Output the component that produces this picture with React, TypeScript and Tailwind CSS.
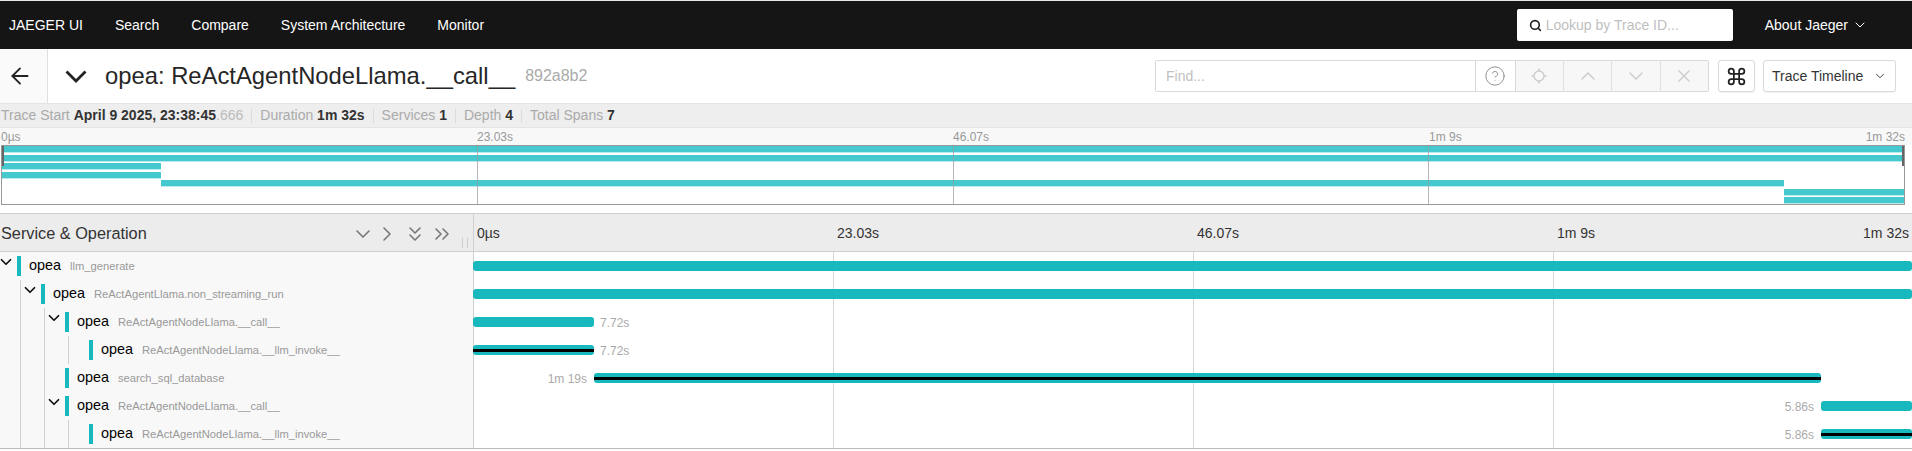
import React from "react";
import {
  ArrowLeft,
  ChevronDown,
  ChevronRight,
  ChevronUp,
  ChevronsDown,
  ChevronsRight,
  CircleHelp,
  Command,
  Search,
  X,
} from "lucide-react";

type Span = {
  depth: number;
  op: string;
  parent: boolean;
  start: number;
  end: number;
  stripe?: boolean;
  label?: string;
  labelLeft?: boolean;
};

const TIMELINE_WIDTH = 1439;

const spans: Span[] = [
  { depth: 0, op: "llm_generate", parent: true, start: 0, end: 1439 },
  { depth: 1, op: "ReActAgentLlama.non_streaming_run", parent: true, start: 0, end: 1439 },
  { depth: 2, op: "ReActAgentNodeLlama.__call__", parent: true, start: 0, end: 121, label: "7.72s" },
  { depth: 3, op: "ReActAgentNodeLlama.__llm_invoke__", parent: false, start: 0, end: 121, stripe: true, label: "7.72s" },
  { depth: 2, op: "search_sql_database", parent: false, start: 121, end: 1348, stripe: true, label: "1m 19s", labelLeft: true },
  { depth: 2, op: "ReActAgentNodeLlama.__call__", parent: true, start: 1348, end: 1439, label: "5.86s", labelLeft: true },
  { depth: 3, op: "ReActAgentNodeLlama.__llm_invoke__", parent: false, start: 1348, end: 1439, stripe: true, label: "5.86s", labelLeft: true },
];

// start / end of each bar in the overview, in px of the canvas
const miniBars = [
  [0, 1902],
  [0, 1902],
  [0, 159],
  [0, 159],
  [159, 1782],
  [1782, 1902],
  [1782, 1902],
];

function TopNav() {
  return (
    <header className="flex h-[49px] items-center border-t border-[#e8e8e8] bg-[#151515] text-[14px] text-white">
      <span className="ml-[9px] mr-[32px]">JAEGER UI</span>
      <nav className="flex gap-[32px]">
        <a>Search</a>
        <a>Compare</a>
        <a>System Architecture</a>
        <a>Monitor</a>
      </nav>
      <div className="ml-auto flex h-[32px] w-[216px] items-center rounded-[2px] bg-white pl-[12px]">
        <Search size={13} strokeWidth={3} className="mr-[4px] text-[#222]" />
        <span className="text-[#bfbfbf]">Lookup by Trace ID...</span>
      </div>
      <div className="ml-[32px] mr-[44px] flex items-center gap-[4px]">
        About Jaeger
        <ChevronDown size={16} strokeWidth={1.5} />
      </div>
    </header>
  );
}

function TitleBar() {
  const navBtn = "flex h-full flex-1 items-center justify-center border-l border-[#e0e0e0] text-[#cccccc]";
  return (
    <div className="flex h-[54px] items-center bg-white">
      <div className="flex h-full w-[48px] items-center justify-center border-r border-[#e0e0e0] bg-[#fafafa] pr-[8px]">
        <ArrowLeft size={26} strokeWidth={1.7} className="text-[#222]" />
      </div>
      <svg width="22" height="13" viewBox="0 0 22 13" fill="none" stroke="#222" strokeWidth="2.8" className="ml-[17px]">
        <path d="M1.5 1.5L11 11L20.5 1.5" />
      </svg>
      <h1 className="ml-[18px] text-[23.8px] leading-none text-[#262626]">opea: ReActAgentNodeLlama.__call__</h1>
      <span className="ml-[10px] text-[16px] text-[#aaa]">892a8b2</span>

      <div className="ml-auto flex h-[32px] w-[554px] rounded-[2px] border border-[#d9d9d9]">
        <div className="flex w-[319px] items-center pl-[10px] text-[14px] text-[#bfbfbf]">Find...</div>
        <div className="flex h-full w-[39.5px] items-center justify-center border-l border-[#d9d9d9] text-[#888]">
          <CircleHelp size={22} strokeWidth={1} />
        </div>
        <div className="flex flex-1 border-l border-[#d9d9d9] bg-[#f7f7f7]">
          <div className="flex h-full flex-1 items-center justify-center text-[#cccccc]">
            <svg width="18" height="18" viewBox="0 0 18 18" fill="none" stroke="currentColor" strokeWidth="1.4">
              <circle cx="9" cy="9" r="5" />
              <path d="M9 1.5v2.5M9 14v2.5M1.5 9H4M14 9h2.5" />
            </svg>
          </div>
          <div className={navBtn}><ChevronUp size={24} strokeWidth={1.5} /></div>
          <div className={navBtn}><ChevronDown size={24} strokeWidth={1.5} /></div>
          <div className={navBtn}><X size={20} strokeWidth={1.6} /></div>
        </div>
      </div>

      <div className="ml-[9px] flex h-[32px] w-[37px] items-center justify-center rounded-[3px] border border-[#d9d9d9] text-[#222] shadow-[0_1px_1px_rgba(0,0,0,0.05)]">
        <Command size={21} strokeWidth={2} />
      </div>
      <div className="ml-[8px] mr-[16px] flex h-[32px] w-[133px] items-center justify-between rounded-[3px] border border-[#d9d9d9] pl-[8px] pr-[8px] text-[14px] text-[#333] shadow-[0_1px_1px_rgba(0,0,0,0.05)]">
        Trace Timeline
        <ChevronDown size={14} strokeWidth={1.6} />
      </div>
    </div>
  );
}

function Divider() {
  return <span className="mx-[8px] h-[14px] w-px bg-[#dcdcdc]" />;
}

function SummaryBar() {
  return (
    <div className="flex h-[25px] items-center border-y border-[#e4e4e4] bg-[#eeeeee] pl-[1px] text-[14px] text-[#aaa]">
      <span>
        Trace Start <strong className="text-[#333]">April 9 2025, 23:38:45</strong>
        <span className="text-[#bbb]">.666</span>
      </span>
      <Divider />
      <span>
        Duration <strong className="text-[#333]">1m 32s</strong>
      </span>
      <Divider />
      <span>
        Services <strong className="text-[#333]">1</strong>
      </span>
      <Divider />
      <span>
        Depth <strong className="text-[#333]">4</strong>
      </span>
      <Divider />
      <span>
        Total Spans <strong className="text-[#333]">7</strong>
      </span>
    </div>
  );
}

function Minimap() {
  return (
    <div>
      <div className="flex h-[17px] items-center justify-between bg-[#f8f8f8] pl-[1px] pr-[7px] text-[12px] text-[#999]">
        <span className="w-[476px]">0µs</span>
        <span className="w-[476px]">23.03s</span>
        <span className="w-[476px]">46.07s</span>
        <span className="flex-1">1m 9s</span>
        <span>1m 32s</span>
      </div>
      <div className="relative ml-[1px] mr-[7px] h-[60px] border border-[#999] bg-white">
        <div className="flex h-full flex-col justify-between">
          {miniBars.map(([start, end], i) => (
            <div key={i} className="flex h-[7px]">
              <div style={{ width: start }} />
              <div style={{ width: end - start }} className="border-b border-[#b9ecee] bg-[#46c8cf]" />
            </div>
          ))}
        </div>
        {[475, 951, 1426].map((x) => (
          <div key={x} className="absolute inset-y-0 w-px bg-[#999]/70" style={{ left: x }} />
        ))}
        <div className="absolute left-0 top-0 h-[20px] w-[2px] bg-[#666]" />
        <div className="absolute right-0 top-0 h-[20px] w-[2px] bg-[#666]" />
      </div>
    </div>
  );
}

function HeaderRow() {
  const iconCls = "absolute top-[8px] text-[#777]";
  return (
    <div className="mt-[8px] flex h-[39px] border-y border-[#cfcfcf] bg-[#ececec]">
      <div className="relative flex w-[474px] items-center border-r border-[#d0d0d0] pl-[1px] pt-[1px] text-[16.3px] text-[#333]">
        Service &amp; Operation
        <ChevronDown size={24} strokeWidth={1.6} className={iconCls + " left-[351px]"} />
        <ChevronRight size={24} strokeWidth={1.6} className={iconCls + " left-[375px]"} />
        <ChevronsDown size={24} strokeWidth={1.6} className={iconCls + " left-[403px]"} />
        <ChevronsRight size={24} strokeWidth={1.6} className={iconCls + " left-[430px]"} />
        <span className="absolute left-[462px] top-[24px] h-[10px] w-[6px] border-x border-[#ccc]" />
      </div>
      <div className="flex flex-1 items-center pl-[3px] pr-[3px] pt-[1px] text-[14px] text-[#333]">
        <span className="w-[360px]">0µs</span>
        <span className="w-[360px]">23.03s</span>
        <span className="w-[360px]">46.07s</span>
        <span className="flex-1">1m 9s</span>
        <span>1m 32s</span>
      </div>
    </div>
  );
}

function Row({ span, guides }: { span: Span; guides: number[] }) {
  const width = span.end - span.start;
  return (
    <div className="flex h-[28px]">
      <div className="relative flex w-[474px] items-center border-r border-[#d0d0d0] bg-[#f8f8f8]">
        {guides.map((d) => (
          <span key={d} className="absolute inset-y-0 w-px bg-[#d0d0d0]" style={{ left: d * 24 + 20 }} />
        ))}
        <div className="flex items-center" style={{ marginLeft: span.depth * 24 }}>
          <span className="flex w-[17px] justify-start">
            {span.parent && <ChevronDown size={18} strokeWidth={2.3} className="-ml-[3px] -mt-[7px] text-[#111]" />}
          </span>
          <span className="h-[20px] w-[4px] bg-[#17b8be]" />
          <span className="ml-[8px] text-[14.4px] text-black">opea</span>
          <span className="ml-[9px] text-[11.2px] text-[#999]">{span.op}</span>
        </div>
      </div>
      <div className="relative flex-1">
        <div
          className="absolute top-[9px] z-10 flex h-[10px] items-center rounded-[3px] bg-[#17b8be]"
          style={{ left: span.start - 1, width }}
        >
          {span.stripe && <div className="h-[3px] w-full bg-black" />}
        </div>
        {span.label && (
          <span
            className="absolute top-[7px] text-[12px] leading-[16px] text-[#aaa]"
            style={span.labelLeft ? { right: TIMELINE_WIDTH - span.start + 7 } : { left: span.end + 5 }}
          >
            {span.label}
          </span>
        )}
      </div>
    </div>
  );
}

export default function App() {
  const guideMap = [[], [0], [0, 1], [0, 1, 2], [0, 1], [0, 1], [0, 1, 2]];
  return (
    <div className="h-[451px] overflow-hidden bg-white font-['Liberation_Sans',sans-serif]">
      <TopNav />
      <TitleBar />
      <SummaryBar />
      <Minimap />
      <HeaderRow />
      <div className="relative overflow-hidden border-b border-[#bbb]">
        {spans.map((span, i) => (
          <Row key={i} span={span} guides={guideMap[i]} />
        ))}
        {[360, 720, 1080].map((x) => (
          <div key={x} className="absolute inset-y-0 w-px bg-[#d8d8d8]" style={{ left: 473 + x }} />
        ))}
      </div>
    </div>
  );
}
